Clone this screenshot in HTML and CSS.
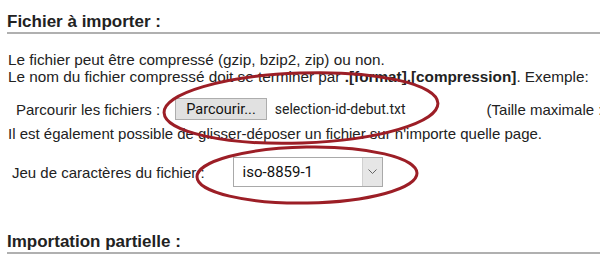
FILE: index.html
```html
<!DOCTYPE html>
<html lang="fr">
<head>
    <meta charset="UTF-8">
    <title>Import</title>
    <link rel="stylesheet" href="styles.css">
</head>
<body>
    <div class="page">
        <h2 class="section-title">Fichier à importer :</h2>
        <p class="intro">
            Le fichier peut être compressé (gzip, bzip2, zip) ou non.<br>
            Le nom du fichier compressé doit se terminer par <b>.[format].[compression]</b>. Exemple:
        </p>
        <div class="file-row">
            <span class="row-label">Parcourir les fichiers :</span>
            <span class="browse-btn">Parcourir...</span>
            <span class="file-name">selection-id-debut.txt</span>
            <span class="max-size">(Taille maximale : 2,048Mio)</span>
        </div>
        <p class="hint">Il est également possible de glisser-déposer un fichier sur n'importe quelle page.</p>
        <div class="charset-row">
            <span class="row-label">Jeu de caractères du fichier :</span>
            <div class="select-box">
                <span class="select-value">iso-8859-1</span>
                <span class="select-arrow">
                    <svg width="9" height="6" viewBox="0 0 9 6"><path d="M0.5 0.5 L4.5 4.5 L8.5 0.5" fill="none" stroke="#666" stroke-width="1"/></svg>
                </span>
            </div>
        </div>
        <h2 class="section-title second">Importation partielle :</h2>
    </div>

    <!-- hand-drawn annotation circles -->
    <svg class="marks" width="600" height="268" viewBox="0 0 600 268">
        <ellipse cx="301" cy="108" rx="137" ry="35" transform="rotate(-2 301 108)" fill="none" stroke="#9c1e26" stroke-width="3"/>
        <ellipse cx="307" cy="175" rx="110" ry="28" transform="rotate(-1 307 175)" fill="none" stroke="#9c1e26" stroke-width="3"/>
    </svg>
</body>
</html>
```

FILE: styles.css
```css
html, body {
    margin: 0;
    padding: 0;
    background: #fff;
    overflow: hidden;
}

body {
    position: relative;
    width: 600px;
    height: 268px;
    font-family: "Liberation Sans", Arial, sans-serif;
    color: #222;
}

.page {
    padding: 0 0 0 7px;
    white-space: nowrap;
}

.section-title {
    margin: 12px 0 0;
    padding-bottom: 1px;
    font-size: 17px;
    line-height: 19px;
    font-weight: bold;
    color: #222;
    border-bottom: 2px solid #b0b0b0;
}

.section-title.second {
    margin-top: 45px;
}

.intro {
    margin: 17px 0 0;
    font-size: 15.3px;
    line-height: 17px;
    padding-left: 1px;
}

.file-row {
    display: flex;
    align-items: center;
    margin-top: 13px;
    padding-left: 9px;
    font-size: 15px;
    height: 22px;
}

.browse-btn {
    display: inline-flex;
    align-items: center;
    height: 20px;
    margin-left: 15px;
    padding: 0 10px;
    background: #e1e1e1;
    border: 1px solid #adadad;
    font-family: Roboto, "Liberation Sans", sans-serif;
    font-size: 14.5px;
    color: #111;
}

.file-name {
    margin-left: 8px;
    font-family: Roboto, "Liberation Sans", sans-serif;
    font-size: 14px;
    color: #222;
}

.max-size {
    margin-left: 81px;
}

.hint {
    margin: 5px 0 0;
    font-size: 15px;
    line-height: 17px;
    padding-left: 1px;
}

.charset-row {
    display: flex;
    align-items: center;
    margin-top: 15px;
    padding-left: 5px;
    font-size: 15px;
}

.select-box {
    display: flex;
    align-items: stretch;
    width: 148px;
    height: 28px;
    margin-left: 28px;
    border: 1px solid #a9a9a9;
    background: #fff;
}

.select-value {
    flex: 1;
    display: flex;
    align-items: center;
    padding-left: 9px;
    font-family: Roboto, "Liberation Sans", sans-serif;
    font-size: 15px;
    color: #111;
}

.select-arrow {
    display: flex;
    align-items: center;
    justify-content: center;
    width: 19px;
    background: #e6e6e6;
    border-left: 1px solid #d0d0d0;
}

.marks {
    position: absolute;
    top: 0;
    left: 0;
    pointer-events: none;
}
```
